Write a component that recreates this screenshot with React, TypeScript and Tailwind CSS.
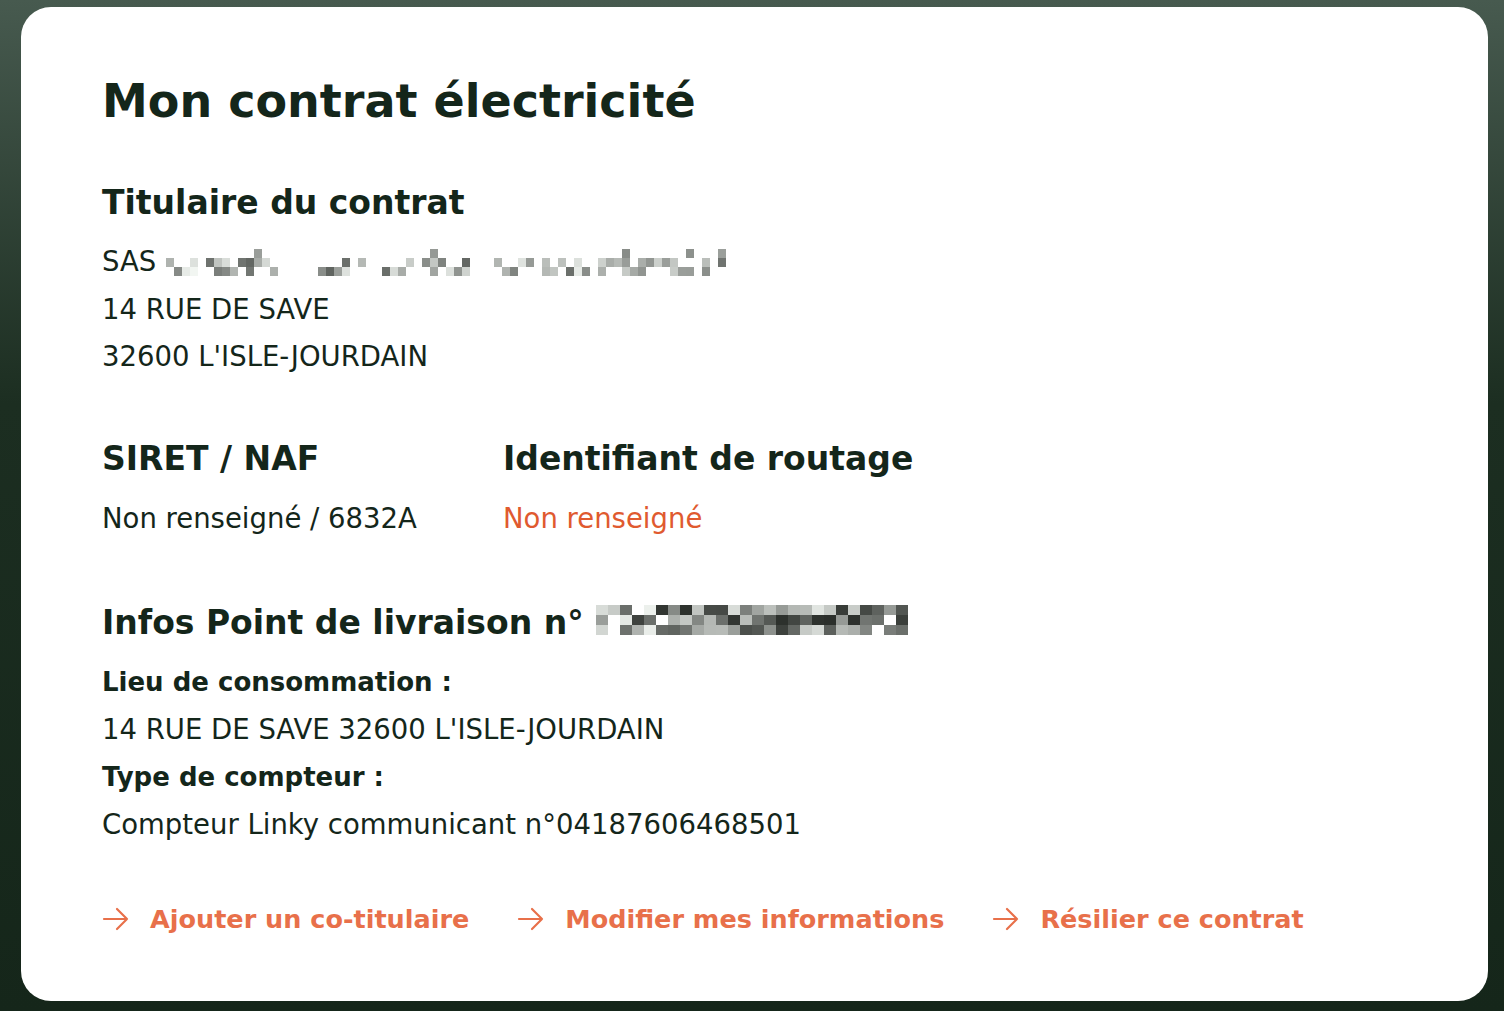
import React from "react";

const DARK = "text-[#14261a]";

function Pixelated({ cols, rows, w, h, seed, skip, min, range, topSparse, className }: { cols: number; rows: number; w: number; h: number; seed: number; skip: number; min: number; range: number; topSparse?: boolean; className?: string }) {
  const rects: React.ReactNode[] = [];
  let s = seed;
  const rnd = () => {
    s = (s * 9301 + 49297) % 233280;
    return s / 233280;
  };
  for (let r = 0; r < rows; r++) {
    for (let c = 0; c < cols; c++) {
      const v = rnd();
      const sk = topSparse && r === 0 ? 0.92 : skip;
      if (v < sk) continue;
      const g = Math.floor(min + rnd() * range);
      rects.push(<rect key={r + "-" + c} x={c * w} y={r * h} width={w} height={h} fill={`rgb(${g},${g + 4},${g})`} />);
    }
  }
  return (
    <svg width={cols * w} height={rows * h} className={className}>
      {rects}
    </svg>
  );
}

function Arrow() {
  return (
    <svg width="28" height="24" viewBox="0 0 28 24" fill="none" stroke="#e8704a" strokeWidth="2.2" strokeLinecap="round" strokeLinejoin="round">
      <path d="M2 12h23M15 2l10 10-10 10" />
    </svg>
  );
}

export default function App() {
  return (
    <div className="min-h-[1011px] w-full bg-gradient-to-b from-[#475a4f] via-[#1c2e21] via-40% to-[#15261a] pl-[21px] pr-[16px] pt-[7px] pb-[10px]" style={{ fontFamily: '"DejaVu Sans", sans-serif' }}>
      <div className={`h-[994px] rounded-[30px] bg-white pl-[81px] pt-[64px] ${DARK}`}>
        <h1 className="text-[46px] font-bold leading-[60px]">Mon contrat électricité</h1>

        <h2 className="mt-[52px] text-[33px] font-bold leading-[40px]">Titulaire du contrat</h2>
        <div className="mt-[15px] text-[27.5px] leading-[47.5px]">
          <div className="flex items-center">
            <span>SAS</span>
            <Pixelated cols={70} rows={3} w={8} h={9} seed={17} skip={0.45} min={95} range={150} topSparse className="ml-[10px] mt-[2px]" />
          </div>
          <div>14 RUE DE SAVE</div>
          <div>32600 L'ISLE-JOURDAIN</div>
        </div>

        <div className="mt-[58px] flex">
          <div className="w-[401px]">
            <h2 className="text-[33px] font-bold leading-[40px]">SIRET / NAF</h2>
            <div className="mt-[23px] text-[27.5px] leading-[32px]">Non renseigné / 6832A</div>
          </div>
          <div>
            <h2 className="text-[33px] font-bold leading-[40px]">Identifiant de routage</h2>
            <div className="mt-[23px] text-[27.5px] leading-[32px] text-[#e05a2f]">Non renseigné</div>
          </div>
        </div>

        <h2 className="mt-[69px] flex items-center text-[33px] font-bold leading-[40px]">
          <span>Infos Point de livraison n°</span>
          <Pixelated cols={26} rows={3} w={12} h={10} seed={5} skip={0.12} min={25} range={215} className="ml-[12px] mt-[-6px]" />
        </h2>
        <div className="mt-[16px] text-[27.5px] leading-[47.5px]">
          <div className="text-[26px] font-bold">Lieu de consommation :</div>
          <div>14 RUE DE SAVE 32600 L'ISLE-JOURDAIN</div>
          <div className="text-[26px] font-bold">Type de compteur :</div>
          <div>Compteur Linky communicant n°04187606468501</div>
        </div>

        <div className="mt-[51px] flex items-center text-[25.5px] font-semibold text-[#e8704a]">
          <a className="flex items-center gap-[20px]"><Arrow /><span>Ajouter un co-titulaire</span></a>
          <a className="ml-[48px] flex items-center gap-[20px]"><Arrow /><span>Modifier mes informations</span></a>
          <a className="ml-[48px] flex items-center gap-[20px]"><Arrow /><span>Résilier ce contrat</span></a>
        </div>
      </div>
    </div>
  );
}
